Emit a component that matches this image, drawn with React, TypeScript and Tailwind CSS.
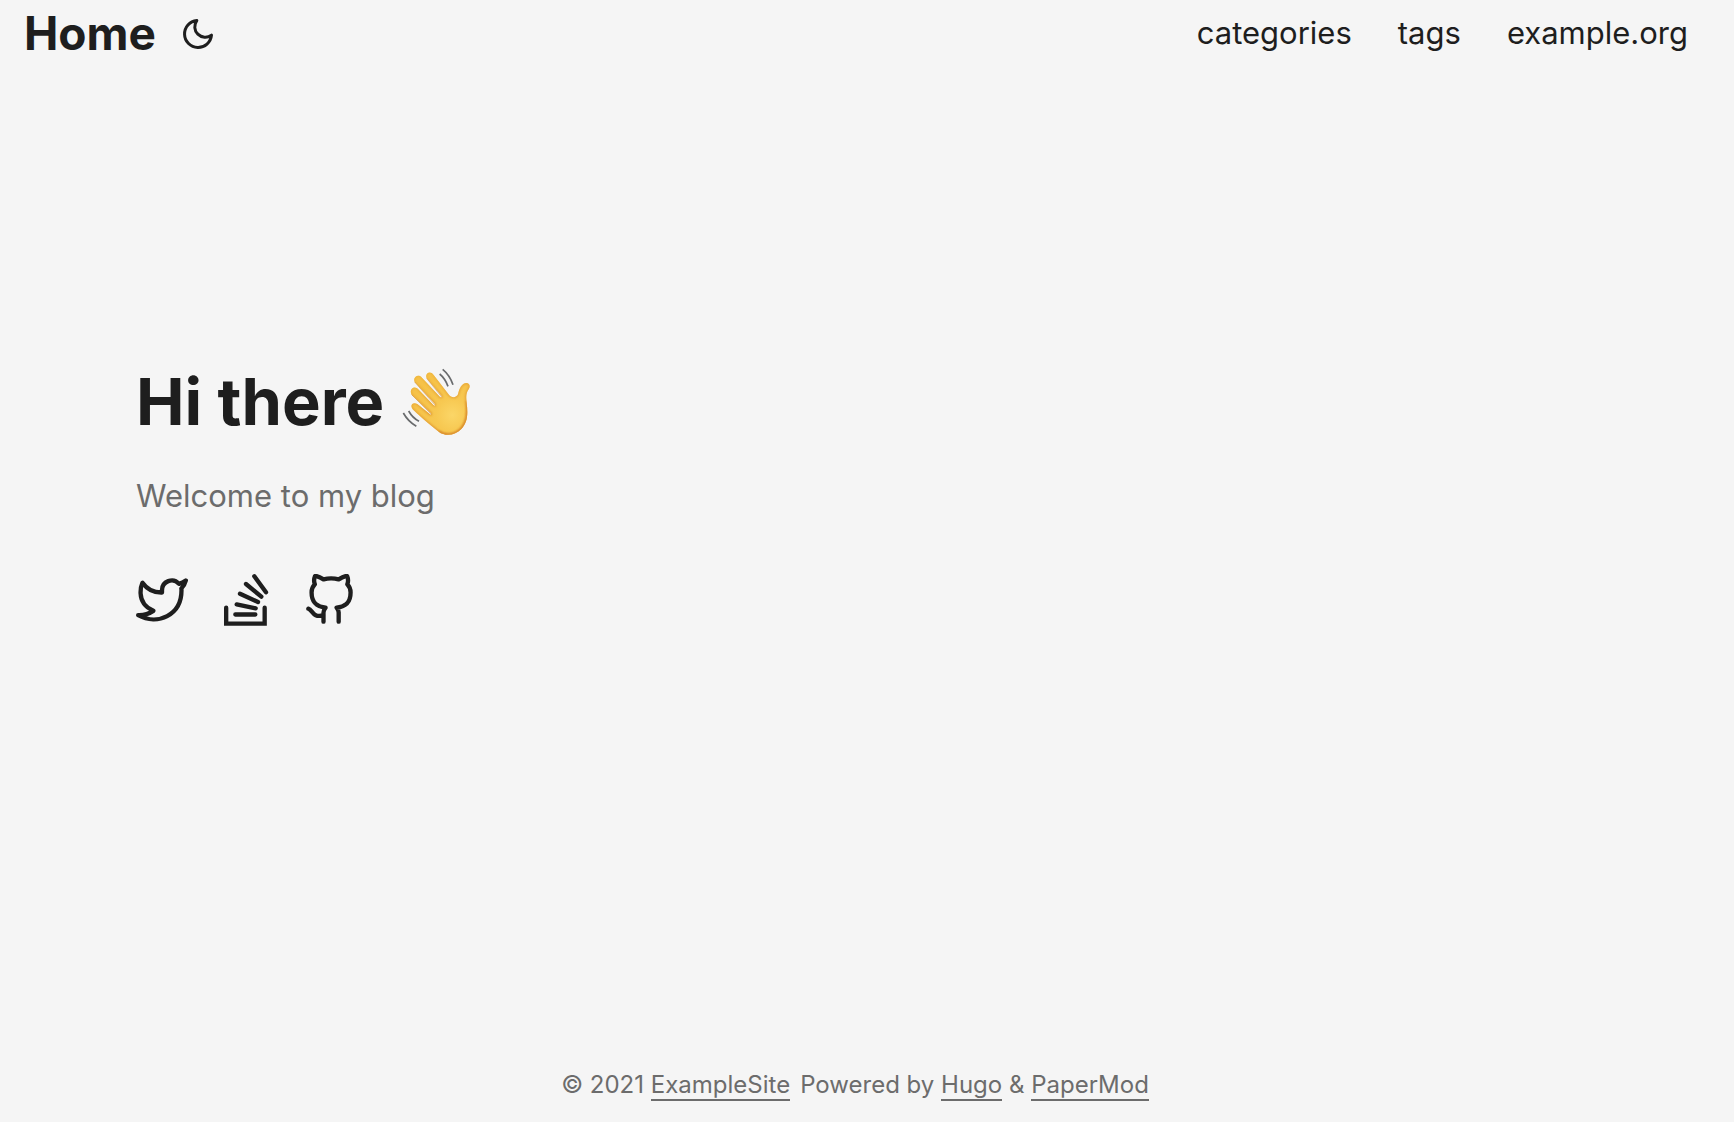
import type { ReactNode } from "react";

const navLinks = ["categories", "tags", "example.org"];

function MoonIcon() {
  return (
    <svg className="size-9" viewBox="0 0 24 24" fill="none" stroke="currentColor" strokeWidth="2" strokeLinecap="round" strokeLinejoin="round" aria-hidden="true">
      <path d="M21 12.79A9 9 0 1 1 11.21 3 7 7 0 0 0 21 12.79z" />
    </svg>
  );
}

function TwitterIcon() {
  return (
    <svg className="size-[52px]" viewBox="0 0 24 24" fill="none" stroke="currentColor" strokeWidth="2" strokeLinecap="round" strokeLinejoin="round" aria-hidden="true">
      <path d="M23 3a10.9 10.9 0 0 1-3.14 1.53 4.48 4.48 0 0 0-7.86 3v1A10.66 10.66 0 0 1 3 4s-4 9 5 13a11.64 11.64 0 0 1-7 2c9 5 20 0 20-11.5a4.5 4.5 0 0 0-.08-.83A7.72 7.72 0 0 0 23 3z" />
    </svg>
  );
}

function StackOverflowIcon() {
  return (
    <svg className="size-[52px]" viewBox="0 0 156 156" fill="none" stroke="currentColor" strokeWidth="13" strokeLinecap="round" aria-hidden="true">
      <path d="M18.500 101V149H134V101" />
      <path d="M46 121.500H106M50 91L107 103M60 59L114 84M78 30L124 68M103 7L138 55" />
    </svg>
  );
}

function GithubIcon() {
  return (
    <svg className="size-[52px]" viewBox="0 0 24 24" fill="none" stroke="currentColor" strokeWidth="2" strokeLinecap="round" strokeLinejoin="round" aria-hidden="true">
      <path d="M9 19c-5 1.5-5-2.500-7-3m14 6v-3.870a3.370 3.370 0 0 0-.940-2.610c3.140-.350 6.440-1.540 6.440-7A5.440 5.440 0 0 0 20 4.770 5.070 5.070 0 0 0 19.910 1S18.730.650 16 2.480a13.380 13.380 0 0 0-7 0C6.270.650 5.090 1 5.090 1A5.070 5.070 0 0 0 5 4.770a5.440 5.440 0 0 0-1.500 3.780c0 5.420 3.300 6.610 6.440 7A3.370 3.370 0 0 0 9 18.130V22" />
    </svg>
  );
}

function WavingHand() {
  return (
    <svg className="size-[68px]" viewBox="35 31 204 204" role="img" aria-label="waving hand">
      <defs>
        <radialGradient id="skin" gradientUnits="userSpaceOnUse" cx="186" cy="172" r="125">
          <stop offset="0" stopColor="#fbd667" />
          <stop offset="0.4" stopColor="#f7c851" />
          <stop offset="1" stopColor="#f6c249" />
        </radialGradient>
        <linearGradient id="rim" gradientUnits="userSpaceOnUse" x1="110" y1="60" x2="190" y2="232">
          <stop offset="0" stopColor="#edb23a" />
          <stop offset="1" stopColor="#d8862a" />
        </linearGradient>
        <filter id="soften" x="-20%" y="-20%" width="140%" height="140%">
          <feGaussianBlur stdDeviation="3" />
        </filter>
        <clipPath id="hand">
          <path id="hand-shape" d="M130 52L174 109C183 122 198 121 203 110C207 92 214 77 228 76C238 76 241 86 235 95C227 106 227 116 229 136C233 169 232 194 213 214C194 234 165 237 145 222C118 202 90 177 70 158C55 143 68 130 82 140L119 170Q124 173 122 167L64 111C54 94 73 81 85 96L129 142Q136 147 134 139L73 73C66 57 85 47 95 60L149 118Q156 121 154 115L109 62C102 46 121 37 130 52Z" />
        </clipPath>
      </defs>
      <use href="#hand-shape" fill="url(#skin)" />
      <g clipPath="url(#hand)" fill="none">
        <use href="#hand-shape" stroke="url(#rim)" strokeWidth="6" filter="url(#soften)" />
        <path d="M230 130C235 170 230 195 213 214C194 234 165 237 145 222" stroke="#d98c2c" strokeWidth="7" filter="url(#soften)" />
      </g>
      <path d="M109 62L154 118M73 73L134 142M64 111L123 170" fill="none" stroke="#c87d28" strokeWidth="2" opacity="0.7" />
      <g fill="none" stroke="#696b6d" strokeWidth="5">
        <path d="M157 35Q178 52 188 81M148 49Q164 62 173 86M39 166Q53 191 78 206M55 160Q66 180 86 191" />
      </g>
    </svg>
  );
}

function SocialLink({ label, children }: { label: string; children: ReactNode }) {
  return (
    <a href="#" aria-label={label}>
      {children}
    </a>
  );
}

function FooterLink({ children }: { children: ReactNode }) {
  return (
    <a href="#" className="border-b-2 border-[#6c6c6c]">
      {children}
    </a>
  );
}

export default function App() {
  return (
    <div className="flex min-h-screen flex-col bg-[#f5f5f5] font-['Inter',sans-serif] text-[#1e1e1e]">
      <header className="flex items-start justify-between pr-[46px] pl-6">
        <div className="flex items-start gap-6">
          <a href="#" className="text-[46px] leading-[66px] font-bold">Home</a>
          <button type="button" aria-label="Toggle theme" className="py-4">
            <MoonIcon />
          </button>
        </div>
        <nav className="flex gap-[46px] text-[31px] leading-[66px]">
          {navLinks.map((link) => (
            <a key={link} href="#">{link}</a>
          ))}
        </nav>
      </header>

      <main className="flex flex-1 flex-col justify-center px-[136px] pb-[137px]">
        <h1 className="flex items-center gap-[18px] text-[65px] leading-[88px] font-bold">
          Hi there
          <WavingHand />
        </h1>
        <p className="mt-6 text-[31px] leading-[52px] text-[#6c6c6c]">Welcome to my blog</p>
        <div className="mt-[52px] flex gap-8">
          <SocialLink label="Twitter"><TwitterIcon /></SocialLink>
          <SocialLink label="Stack Overflow"><StackOverflowIcon /></SocialLink>
          <SocialLink label="GitHub"><GithubIcon /></SocialLink>
        </div>
      </main>

      <footer className="flex justify-center gap-2.5 pt-3 pr-6 pb-[17px] text-[24px] leading-10 text-[#6c6c6c]">
        <span>© 2021 <FooterLink>ExampleSite</FooterLink></span>
        <span>Powered by <FooterLink>Hugo</FooterLink> &amp; <FooterLink>PaperMod</FooterLink></span>
      </footer>
    </div>
  );
}
